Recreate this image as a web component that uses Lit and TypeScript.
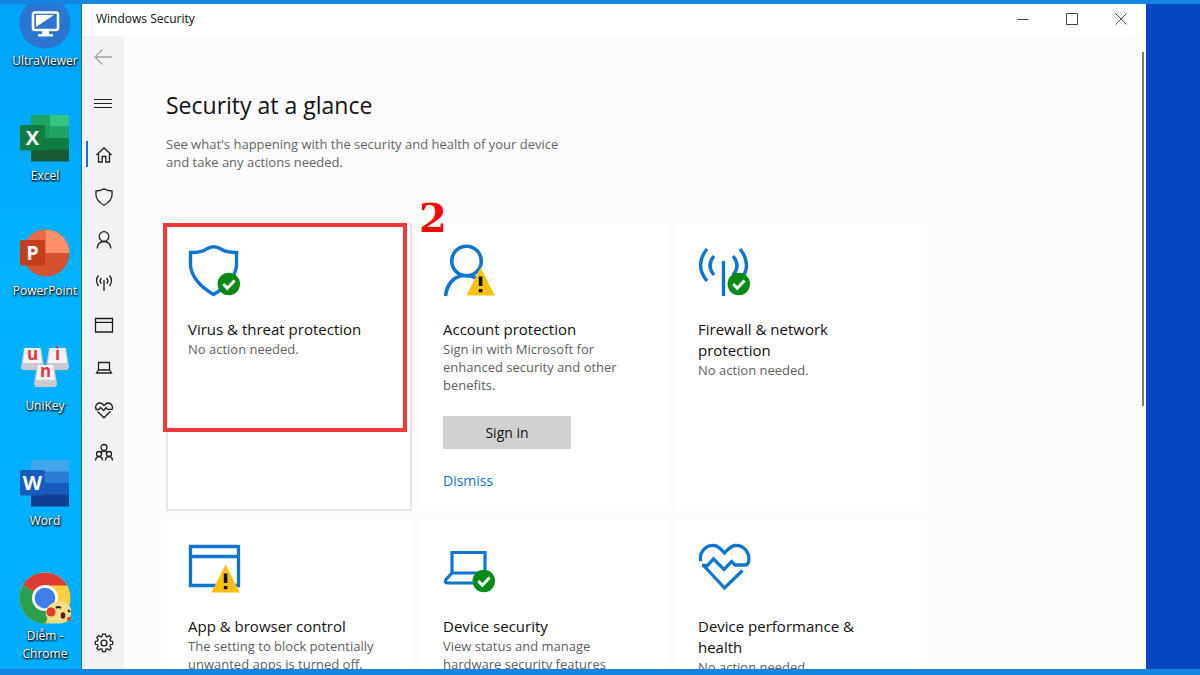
import { LitElement, html, css, svg, nothing } from "lit";
import { customElement } from "lit/decorators.js";
import { classMap } from "lit/directives/class-map.js";

const blue = "#0f75cf";

const okBadge = (x: number, y: number) => svg`
  <circle cx=${x} cy=${y} r="11.2" fill="#058a17"/>
  <path d=${`M${x - 5.5} ${y}l4 4.2 7.3-7.8`} fill="none" stroke="#fff" stroke-width="3"/>`;

const warnBadge = (x: number, y: number) => svg`
  <path d=${`M${x} ${y}l14.2 28h-28.4z`} fill="#fdc00f"/>
  <path d=${`M${x} ${y + 9}v9.5M${x} ${y + 21.5}v3.3`} stroke="#111" stroke-width="3.6"/>`;

const cardIcons = {
  shield: svg`<path d="M2.500 8.500q12 0 16-3.500Q25.500 .5 33 5 38 8.500 48.500 8.500V22Q46.500 38 25.500 50.500 4.500 38 2.500 22z" fill="none" stroke=${blue} stroke-width="3.400"/>${okBadge(40.8, 40)}`,
  account: svg`<g fill="none" stroke=${blue} stroke-width="3.600"><circle cx="23.500" cy="17" r="14.800"/><path d="M2.500 52C4 39 12 31.500 22 31.500q7 0 12 3"/></g>${warnBadge(37.6, 23.5)}`,
  network: svg`<g fill="none" stroke=${blue} stroke-width="3.400"><path d="M9 5Q-4 21 9 37M16 12Q8 21.500 16 31M42 5Q55 21 42 37M35 12Q43 21.500 35 31M25.500 17v35"/></g>${okBadge(40.8, 40)}`,
  browser: svg`<g fill="none" stroke=${blue} stroke-width="3.300"><path d="M2.500 5.500h48v39h-48zM2.500 15.500h48"/></g>${warnBadge(37.6, 23.5)}`,
  laptop: svg`<g fill="none" stroke=${blue} stroke-width="3.200"><path d="M9 11.500h33V32H9zM9 32l-6 6.500q-2 3.500 2 3.500h30"/></g>${okBadge(40.8, 40)}`,
  heart: svg`<g fill="none" stroke=${blue} stroke-width="3.300"><path d="M2.800 20C.5 10 9 4 16 4.500c5 .5 7 4 10.500 7.500 3.500-3.500 6-7 10.500-7.500 9-.5 15.500 7.500 13.500 16.500q-.8 3-3.500 3H37l-3.500-3.500-7.500 8L15.500 18l-6 6.500H4M6.500 25.500l20 21.500 18-17.500"/></g>`,
};

const navIcons = {
  back: svg`<path d="M19 10H2M9.500 2.500L2 10l7.500 7.500" stroke="#a3a3a3"/>`,
  menu: svg`<path d="M1 6.500h18M1 10.500h18M1 14.500h18" stroke-width="1"/>`,
  home: svg`<path d="M2.500 10L10 3l7.500 7M4.500 9v8h3.700v-5.500h3.600V17h3.700V9"/>`,
  shield: svg`<path d="M2 4q5 0 8-2.200Q13 4 18 4v4.500Q17.500 14 10 18.200 2.500 14 2 8.500z"/>`,
  person: svg`<circle cx="10" cy="6.500" r="4.800"/><path d="M3 18.500q1-7 7-7t7 7"/>`,
  network: svg`<path d="M4.500 3.500q-4 5 0 10.500M7.300 6Q5 9 7.300 11.500M15.500 3.500q4 5 0 10.500M12.700 6Q15 9 12.700 11.500M10 8v11"/>`,
  browser: svg`<path d="M1.500 3.500h17v13.500h-17zM1.500 7.300h17"/>`,
  laptop: svg`<path d="M4.500 5.500h11V13h-11zM4.500 13l-2 3h15l-2-3"/>`,
  heart: svg`<path d="M2 9C.8 5.500 3 3 5.800 3 8 3 9 4.500 10 5.500 11 4.500 12 3 14.200 3c3 0 5 2.700 3.900 6.300H13.500l-1.500-1.800-2.300 3L6.500 7.500 4.800 9.500H1.500M3.500 11.500l6.500 6.300 6.500-6.500"/>`,
  people: svg`<circle cx="10" cy="5.500" r="3"/><circle cx="5" cy="12" r="2.500"/><circle cx="15" cy="12" r="2.500"/><path d="M1.500 18.500q.5-4 3.500-4t3.700 4M11.300 18.500q.5-4 3.700-4t3.500 4M7 10.500q3-3.500 6 0"/>`,
  settings: svg`<circle cx="10" cy="10" r="2.900"/><path d="M8.500 1.800h3l.5 2.400 1.400.6 2.100-1.400 2.100 2.100-1.400 2.100.6 1.400 2.400.5v3l-2.400.5-.6 1.400 1.400 2.100-2.100 2.100-2.100-1.400-1.400.6-.5 2.400h-3L8 17.800l-1.400-.6-2.100 1.400-2.100-2.100 1.400-2.100-.6-1.400L.8 12.500v-3L3.200 9l.6-1.400-1.400-2.100 2.100-2.100 2.100 1.400L8 4.200z" transform="translate(.5 -.6) scale(.95)"/>`,
};

const office = (letter: string, colors: string[], tile: string) => svg`
  <g>${colors.map((c, i) => svg`<rect x="12" y=${3 + i * 11.5} width="38" height="12" fill=${c}/>`)}</g>
  <rect x="1" y="13" width="25" height="25.500" rx="2" fill=${tile}/>
  <text x="13.500" y="33" class="tile">${letter}</text>`;

const keycap = (x: number, y: number, letter: string) => svg`
  <path d=${`M${x + 3} ${y}h17l3 19q0 3-3 3H${x + 3}q-3 0-3-3z`} fill="#c9c9cf"/>
  <path d=${`M${x + 4} ${y}h15l2 15H${x + 2}z`} fill="#f4f4f6"/>
  <text x=${x + 11.5} y=${y + 12} class="key">${letter}</text>`;

const appIcons = {
  ultra: svg`<circle cx="26" cy="26" r="25.500" fill="#2b74cf"/>
    <rect x="14" y="15.500" width="25" height="17.500" rx="2" fill="#2b74cf" stroke="#fff" stroke-width="2.600"/>
    <path d="M17 30V18h18z" fill="#fff"/><path d="M23 34h7v3h4v2.500H19V37h4z" fill="#fff"/>`,
  excel: svg`${office("X", ["#21a366", "#1c9a5c", "#107c41", "#185c37"], "#107c41")}<path d="M31 3h19v11.500H31z" fill="#33c481"/><path d="M31 14.500h19V26H31z" fill="#21a366"/>`,
  power: svg`<circle cx="27" cy="26" r="23.500" fill="#d35230"/><path d="M27 2.500A23.500 23.500 0 0 1 50.500 26H27z" fill="#ff8f6b"/><path d="M27 2.500A23.500 23.500 0 0 0 3.500 26H27z" fill="#ed6c47"/>
    <rect x="1" y="13" width="25" height="25.500" rx="2" fill="#c43e1c"/><text x="13.500" y="33" class="tile">P</text>`,
  unikey: svg`${keycap(2, 6, "u")}${keycap(27, 6, "i")}${keycap(15, 23, "n")}`,
  word: office("W", ["#41a5ee", "#2b7cd3", "#185abd", "#103f91"], "#185abd"),
  chrome: svg`<circle cx="26" cy="26" r="25.500" fill="#ffcd40"/>
    <path d="M26 26L3.900 13.300A25.500 25.500 0 0 1 48 13.500H26z" fill="#df3b30"/>
    <path d="M26 26L3.900 13.300A25.500 25.500 0 0 0 26 51.500L37 33z" fill="#2c9f4b"/>
    <circle cx="26" cy="26" r="13" fill="#fff"/><circle cx="26" cy="26" r="10.300" fill="#3f7fea"/>
    <path d="M28 51q1-4-1-8-1-7 5-11 6-5 13-2 5 2 7 7 1 12-8 14-8 1-16 0z" fill="#f8dc86"/>
    <circle cx="32" cy="40" r="4.500" fill="#e5382a"/><circle cx="50" cy="47" r="2" fill="#e5382a"/><ellipse cx="44" cy="43.500" rx="2.300" ry="3.200" fill="#5b1a12"/>
    <path d="M37 36q2-2 5 0M49 38l2 2" fill="none" stroke="#222" stroke-width="1.800"/>`,
};

const apps = [
  { icon: "ultra", label: "UltraViewer" },
  { icon: "excel", label: "Excel" },
  { icon: "power", label: "PowerPoint" },
  { icon: "unikey", label: "UniKey" },
  { icon: "word", label: "Word" },
  { icon: "chrome", label: "Diễm - Chrome" },
];

const sections = [
  { icon: "home", label: "Home" },
  { icon: "shield", label: "Virus & threat protection" },
  { icon: "person", label: "Account protection" },
  { icon: "network", label: "Firewall & network protection" },
  { icon: "browser", label: "App & browser control" },
  { icon: "laptop", label: "Device security" },
  { icon: "heart", label: "Device performance & health" },
  { icon: "people", label: "Family options" },
];

interface Card { icon: string; title: string; text: string; step?: string; action?: string }

const cards: Card[] = [
  { icon: "shield", title: "Virus & threat protection", text: "No action needed.", step: "2" },
  { icon: "account", title: "Account protection", text: "Sign in with Microsoft for enhanced security and other benefits.", action: "Sign in" },
  { icon: "network", title: "Firewall & network protection", text: "No action needed." },
  { icon: "browser", title: "App & browser control", text: "The setting to block potentially unwanted apps is turned off." },
  { icon: "laptop", title: "Device security", text: "View status and manage hardware security features" },
  { icon: "heart", title: "Device performance & health", text: "No action needed." },
];

@customElement("app-root")
export class AppRoot extends LitElement {
  static styles = css`
    :host {
      display: grid;
      grid-template: 4px minmax(0, 1fr) 6px / 82px minmax(0, 1fr) 54px;
      height: 100vh;
      overflow: hidden;
      background: #1585e3;
      color: #111;
      font: 14px/18px "Open Sans", "Noto Sans", sans-serif;
    }
    * { box-sizing: border-box; }
    button { font: inherit; color: inherit; border: 0; padding: 0; background: none; }
    a { color: #0f75cf; text-decoration: none; }
    h1, h2, p, ul { margin: 0; padding: 0; }
    ul { list-style: none; }

    .desktop { grid-row: 2; overflow: hidden; background: linear-gradient(#00a3f8, #00b2ff 40%, #00aefc); border-right: 1px solid #1a6f9f; }
    .apps { margin: -7px 0 0 9px; }
    .app { display: flex; flex-direction: column; align-items: center; gap: 3px; height: 115px; font-size: 12px; text-align: center; }
    .app a { display: contents; color: #fff; }
    .app svg { flex: none; width: 52px; height: 52px; }
    .app span { max-width: 72px; text-shadow: 1px 1px 2px #000, 0 1px 2px #000; }
    .tile { font: 700 20px "Open Sans", sans-serif; fill: #fff; text-anchor: middle; }
    .key { font: 700 17px "Open Sans", sans-serif; fill: #e8343c; text-anchor: middle; }

    .wallpaper { grid-area: 2 / 3; background: #0547c2; }

    .window { grid-area: 2 / 2; display: grid; grid-template: 32px minmax(0, 1fr) / 42px minmax(0, 1fr); background: #fff; }
    .titlebar { grid-column: 1 / -1; display: flex; justify-content: space-between; align-items: center; padding: 0 1px 2px 14px; font-size: 12px; }
    .caption { display: flex; }
    .caption button { display: grid; place-items: center; width: 49px; height: 30px; }
    .caption svg { width: 12px; height: 12px; fill: none; stroke: #444; }

    .nav { display: flex; flex-direction: column; background: #f2f2f2; padding-bottom: 5px; }
    .nav button { display: grid; place-items: center; width: 42px; height: 42px; }
    .nav svg { width: 20px; height: 20px; fill: none; stroke: #1d1d1d; stroke-width: 1.3; }
    .sections { margin: 10px 0 auto; }
    .nav .section { width: 44px; }
    .menu { margin-top: 4px; }
    .current { position: relative; }
    .current::before { content: ""; position: absolute; left: 4px; top: 7px; width: 2px; height: 26px; background: #0f75cf; }
    .sections { display: flex; flex-direction: column; justify-content: space-between; height: 339px; }

    .content { position: relative; overflow: hidden; background: #fcfcfc; padding: 53px 42px 0; }
    .thumb { position: absolute; right: 2px; top: 16px; width: 2px; height: 56%; background: #7a7a7a; }
    h1 { font-size: 23px; line-height: 32px; font-weight: 400; }
    .intro { max-width: 410px; margin: 14px 0 52px; font-size: 13px; color: #666; }
    .cards { display: grid; grid-template-columns: repeat(auto-fill, 246px); gap: 9px; }
    .card { position: relative; min-height: 288px; padding: 19px 20px; background: #fff; border: 2px solid transparent; }
    .hover { border-color: #e6e6e6; }
    .card > svg { display: block; width: 54px; height: 54px; margin-bottom: 21px; }
    .card h2 { max-width: 196px; font-size: 15px; line-height: 21px; font-weight: 400; }
    .card p { max-width: 196px; font-size: 13px; color: #5f5f5f; }
    .signin { display: block; width: 128px; height: 33px; margin: 22px 0 23px; background: #d1d1d1; }
    .mark { position: absolute; left: -5px; top: -2px; width: 244px; height: 209px; border: 4px solid #f03a3a; }
    .step { position: absolute; left: 251px; top: -31px; font: 700 40px/48px "DejaVu Serif", serif; color: #f90606; z-index: 1; }
  `;

  private card(c: Card) {
    return html`<article class=${classMap({ card: true, hover: !!c.step })}>
      <svg viewBox="0 0 54 54" aria-hidden="true">${cardIcons[c.icon]}</svg>
      <h2>${c.title}</h2>
      <p>${c.text}</p>
      ${c.action ? html`<button class="signin">${c.action}</button><a href="#">Dismiss</a>` : nothing}
      ${c.step ? html`<div class="mark"></div><div class="step">${c.step}</div>` : nothing}
    </article>`;
  }

  private navButton(icon: string, label: string, cls = "") {
    return html`<button class=${cls} aria-label=${label}><svg viewBox="0 0 20 20">${navIcons[icon]}</svg></button>`;
  }

  render() {
    return html`
      <div class="desktop">
        <ul class="apps">
          ${apps.map((a) => html`<li class="app"><a href="#"><svg viewBox="0 0 52 52" aria-hidden="true">${appIcons[a.icon]}</svg><span>${a.label}</span></a></li>`)}
        </ul>
      </div>
      <div class="window">
        <header class="titlebar">
          <span>Windows Security</span>
          <div class="caption">
            <button aria-label="Minimize"><svg viewBox="0 0 12 12"><path d="M.5 6.500h11"/></svg></button>
            <button aria-label="Maximize"><svg viewBox="0 0 12 12"><path d="M.5.5h11v11H.5z"/></svg></button>
            <button aria-label="Close"><svg viewBox="0 0 12 12"><path d="M.5.5l11 11M11.500.5l-11 11"/></svg></button>
          </div>
        </header>
        <nav class="nav">
          ${this.navButton("back", "Back")}
          ${this.navButton("menu", "Menu", "menu")}
          <ul class="sections">
            ${sections.map((s, i) => html`<li>${this.navButton(s.icon, s.label, i === 0 ? "section current" : "section")}</li>`)}
          </ul>
          ${this.navButton("settings", "Settings", "section")}
        </nav>
        <main class="content">
          <h1>Security at a glance</h1>
          <p class="intro">See what's happening with the security and health of your device and take any actions needed.</p>
          <div class="cards">${cards.map((c) => this.card(c))}</div>
          <div class="thumb"></div>
        </main>
      </div>
      <div class="wallpaper"></div>
    `;
  }
}
